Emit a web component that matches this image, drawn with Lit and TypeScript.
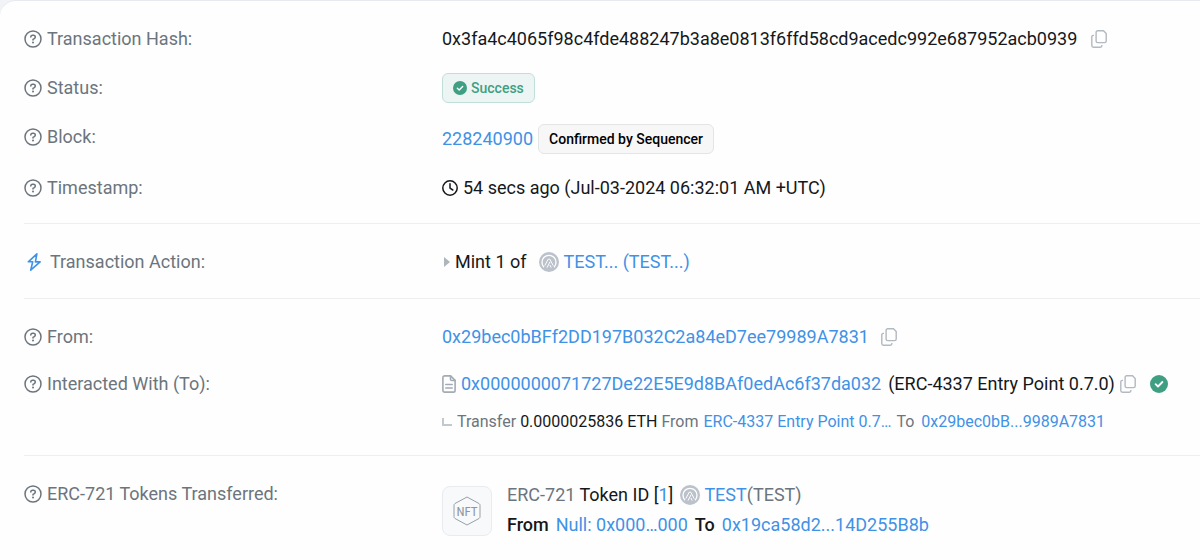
import { LitElement, html, css, type TemplateResult } from "lit";
import { customElement } from "lit/decorators.js";

const helpIcon = html`<svg class="icon help" viewBox="0 0 18 18" aria-hidden="true">
  <circle cx="9" cy="9" r="8" />
  <path d="M6.8 7c0-1.1.8-1.8 1.9-1.8h.7c1.1 0 1.9.8 1.9 1.8 0 .8-.4 1.2-1 1.6L9 9.400v.7" />
  <circle class="dot" cx="9" cy="12.400" r="1" />
</svg>`;

const boltIcon = html`<svg class="icon bolt" viewBox="0 0 18 20" aria-hidden="true">
  <path d="M11.400 1.800 2.800 9.800H7.200L5.200 18.200 14.600 9.900H9.900Z" />
</svg>`;

const clockIcon = html`<svg class="icon clock" viewBox="0 0 16 16" aria-hidden="true">
  <circle cx="8" cy="8" r="7.200" />
  <path d="M8 3.800V8.200L10.800 10" />
</svg>`;

const fileIcon = html`<svg class="icon file" viewBox="0 0 14 18" aria-hidden="true">
  <path d="M2.600.9H8.600L13.100 5.400V15.400a1.700 1.700 0 0 1-1.700 1.700H2.600A1.700 1.700 0 0 1 .9 15.400V2.600A1.700 1.700 0 0 1 2.600.9Z" />
  <path d="M8.500 1v3.200q0 1.300 1.300 1.300H13M3.800 9.500h6.400M3.800 13h6.400" />
</svg>`;

const checkIcon = html`<svg class="check" viewBox="0 0 18 18" aria-hidden="true">
  <circle cx="9" cy="9" r="9" />
  <path d="M5.600 9.200 8 11.500 12.400 7" />
</svg>`;

const copyButton = (what: string) => html`<button class="copy" type="button" aria-label="Copy ${what}">
  <svg viewBox="0 0 16 18" aria-hidden="true">
    <path d="M6.700.8h5.800L15.200 3.500V11a1.600 1.600 0 0 1-1.600 1.600H6.700A1.600 1.600 0 0 1 5.100 11V2.400A1.600 1.600 0 0 1 6.700.8Z" />
    <path d="M3 5.400H2.400A1.600 1.600 0 0 0 .8 7v8.600a1.600 1.600 0 0 0 1.600 1.600h6.900a1.600 1.600 0 0 0 1.600-1.600V15" />
  </svg>
</button>`;

const tokenIcon = html`<svg class="token" viewBox="0 0 20 20" aria-hidden="true">
  <circle class="disc" cx="10" cy="10" r="10" />
  <path class="arch" d="M5 15.200A7 7 0 1 1 15 15.200" />
  <path class="ray" d="M5.800 13.600 9.200 7.200h1.600l3.400 6.400M8 15.600 11 9.800M12.200 15.600l-1.300-2.600" />
</svg>`;

const nftIcon = html`<svg class="nft" viewBox="0 0 30 30" role="img" aria-label="NFT">
  <path d="M15 1 27 7.500Q28 8.100 28 9.300V20.700Q28 21.900 27 22.500L15 29 3 22.500Q2 21.900 2 20.700V9.300Q2 8.100 3 7.500Z" />
  <text x="15" y="20" text-anchor="middle">NFT</text>
</svg>`;

const link = (text: string) => html`<a href="#">${text}</a>`;

const row = (label: string, value: TemplateResult, icon = helpIcon) => html`
  <div class="row">
    <dt class="label">${icon}<span>${label}</span></dt>
    <dd class="value">${value}</dd>
  </div>
`;

@customElement("app-root")
export class AppRoot extends LitElement {
  static styles = css`
    :host {
      display: block;
      min-height: 100vh;
      overflow: hidden;
      background: #f1f3f6;
      color: #15181b;
      font: 400 18px/30px Roboto, "Open Sans", sans-serif;
    }
    * { box-sizing: border-box; }
    .card {
      min-height: 100vh;
      padding-left: 24px;
      background: #fefefe;
      border-top: 1px solid #e6e9ed;
      border-radius: 16px 0 0 0;
    }
    dl, dd { margin: 0; }
    .section {
      display: flex;
      flex-direction: column;
      gap: 19px;
      padding: 23px 0 20px;
    }
    .section + .section { border-top: 1px solid #eceeef; }
    .section.action { padding-bottom: 21px; }
    .section.parties { gap: 17px; }
    .row {
      display: grid;
      grid-template-columns: minmax(220px, 418px) minmax(0, 1fr);
    }
    .label {
      display: flex;
      align-items: center;
      gap: 5px;
      height: 30px;
      color: #6c757d;
      white-space: nowrap;
    }
    .line {
      display: flex;
      align-items: center;
      white-space: nowrap;
    }
    .g4 { gap: 4px; }
    .g5 { gap: 5px; }
    .g7 { gap: 7px; }
    .g12 { gap: 12px; }
    .g14 { gap: 14px; }
    .block { padding-top: 2px; }
    a { color: #3f92e6; text-decoration: none; }
    b { font-weight: 500; }
    .muted { color: #6c757d; }
    svg { display: block; flex: none; }
    .icon { fill: none; stroke: currentColor; stroke-linecap: round; stroke-linejoin: round; }
    .help { width: 18px; height: 18px; stroke-width: 1.5; }
    .help .dot { fill: currentColor; stroke: none; }
    .bolt { width: 21px; height: 20px; color: #3f92e6; stroke-width: 1.6; }
    .clock { width: 16px; height: 16px; stroke-width: 1.5; }
    .file { width: 14px; height: 18px; color: #a3abb3; stroke-width: 1.6; }
    .copy {
      padding: 0;
      border: 0;
      background: none;
      color: #b3b9c0;
      cursor: pointer;
    }
    .copy svg { width: 16px; height: 18px; fill: none; stroke: currentColor; stroke-width: 1.4; }
    .check { width: 18px; height: 18px; fill: #3f9f82; }
    .check path { fill: none; stroke: #fff; stroke-width: 1.8; stroke-linecap: round; stroke-linejoin: round; }
    .badge {
      display: inline-flex;
      align-items: center;
      gap: 4px;
      height: 30px;
      padding: 0 10px;
      border: 1px solid #e2e4e6;
      border-radius: 6px;
      background: #f7f7f8;
      color: #000;
      font-size: 14px;
      font-weight: 500;
    }
    .badge.success {
      border-color: #c0dfd8;
      background: #edf5f4;
      color: #3f9f82;
    }
    .badge .check { width: 14px; height: 14px; }
    .toggle {
      display: flex;
      align-items: center;
      gap: 5px;
      padding: 0;
      border: 0;
      background: none;
      color: inherit;
      font: inherit;
    }
    .caret {
      width: 8px;
      height: 10px;
      padding-left: 2px;
      fill: #adb5bd;
    }
    .token { width: 20px; height: 20px; }
    .token .disc { fill: #bcc2cb; }
    .token .arch, .token .ray { fill: none; stroke: #fff; stroke-linejoin: round; }
    .token .arch { stroke-width: 1.3; }
    .token .ray { stroke-width: 1; }
    .sub {
      padding-top: 10px;
      font-size: 16px;
      line-height: 26px;
      color: #6c757d;
    }
    .amount { color: #15181b; }
    .elbow {
      width: 10px;
      height: 8px;
      border: solid #c3c8cd;
      border-width: 0 0 2px 2px;
    }
    .transfer { display: flex; gap: 15px; padding-top: 1px; white-space: nowrap; }
    .tile {
      display: grid;
      place-items: center;
      width: 50px;
      height: 50px;
      margin-top: 6px;
      border: 1px solid #e9ecef;
      border-radius: 8px;
      background: #f8f9fa;
    }
    .nft { width: 30px; height: 30px; fill: none; stroke: #98a0a8; }
    .nft text {
      fill: #8d959d;
      stroke: none;
      font: 400 13px "Roboto Condensed", "Liberation Sans Narrow", Roboto, sans-serif;
    }
  `;

  render() {
    return html`
      <main class="card">
        <dl class="section">
          ${row("Transaction Hash:", html`<div class="line g14">
            <span>0x3fa4c4065f98c4fde488247b3a8e0813f6ffd58cd9acedc992e687952acb0939</span>
            ${copyButton("transaction hash")}
          </div>`)}
          ${row("Status:", html`<div class="line"><span class="badge success">${checkIcon}Success</span></div>`)}
          ${row("Block:", html`<div class="line g5 block">
            ${link("228240900")}<span class="badge">Confirmed by Sequencer</span>
          </div>`)}
          ${row("Timestamp:", html`<div class="line g5">
            ${clockIcon}<span>54 secs ago (Jul-03-2024 06:32:01 AM +UTC)</span>
          </div>`)}
        </dl>
        <dl class="section action">
          ${row("Transaction Action:", html`<div class="line g12">
            <button class="toggle" type="button">
              <svg class="caret" viewBox="0 0 6 10" aria-hidden="true"><path d="M0 0 6 5 0 10Z" /></svg>Mint 1 of
            </button>
            <span class="line g5">${tokenIcon}${link("TEST... (TEST...)")}</span>
          </div>`, boltIcon)}
        </dl>
        <dl class="section parties">
          ${row("From:", html`<div class="line g12">
            ${link("0x29bec0bBFf2DD197B032C2a84eD7ee79989A7831")}${copyButton("sender address")}
          </div>`)}
          ${row("Interacted With (To):", html`
            <div class="line g5">
              <span class="line g7">
                <span class="line g5">${fileIcon}${link("0x0000000071727De22E5E9d8BAf0edAc6f37da032")}</span>
                <span>(ERC-4337 Entry Point 0.7.0)</span>
              </span>
              <span class="line g14">${copyButton("contract address")}${checkIcon}</span>
            </div>
            <div class="line g5 sub">
              <span class="elbow"></span>
              <span>Transfer <span class="amount">0.0000025836 ETH</span> From</span>
              ${link("ERC-4337 Entry Point 0.7…")}
              <span class="line g7">
                <span>To</span>
                ${link("0x29bec0bB...9989A7831")}
              </span>
            </div>`)}
        </dl>
        <dl class="section">
          ${row("ERC-721 Tokens Transferred:", html`<div class="transfer">
            <span class="tile">${nftIcon}</span>
            <div>
              <div class="line g7">
                <span><span class="muted">ERC-721</span> Token ID [${link("1")}]</span>
                <span class="line g4">${tokenIcon}<span>${link("TEST")}<span class="muted">(TEST)</span></span></span>
              </div>
              <div class="line g7"><b>From</b>${link("Null: 0x000…000")}<b>To</b>${link("0x19ca58d2...14D255B8b")}</div>
            </div>
          </div>`)}
        </dl>
      </main>
    `;
  }
}
